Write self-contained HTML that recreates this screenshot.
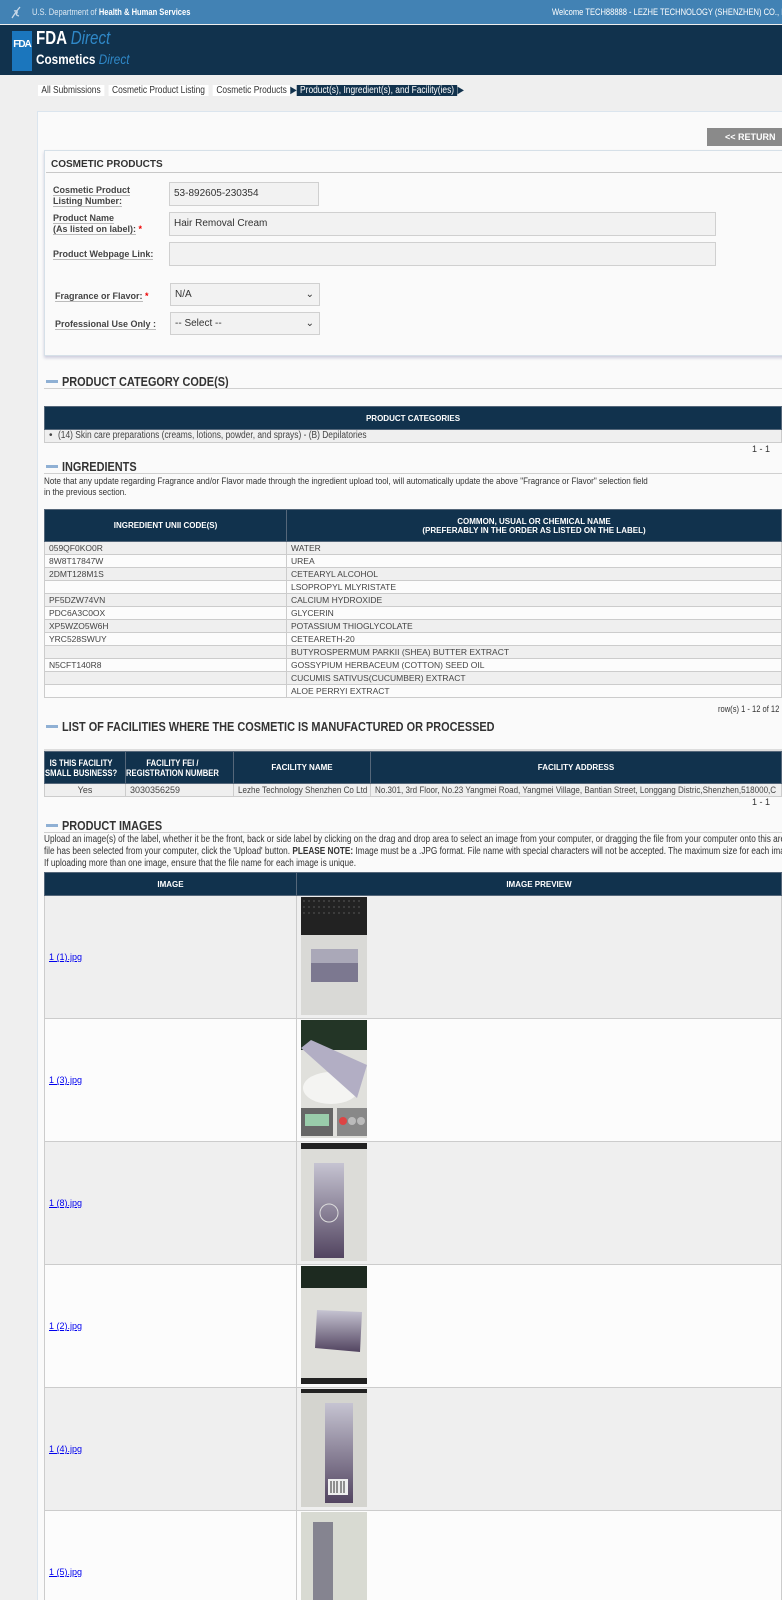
<!DOCTYPE html>
<html><head><meta charset="utf-8"><style>
*{margin:0;padding:0;box-sizing:border-box}
html,body{width:782px;height:1600px;overflow:hidden}
body{background:#efefef;font-family:"Liberation Sans",Arial,sans-serif;color:#333;position:relative}
.a{position:absolute}
.n{display:inline-block;transform:scaleX(.84);transform-origin:left top;white-space:nowrap}
.top{left:0;top:0;width:782px;height:24px;background:#4282b4;color:#dce8f2;font-size:9px}
.nav{left:0;top:25px;width:782px;height:50px;background:#11324d}
.panel{left:37px;top:111px;width:745px;height:1500px;background:#fafafa;border:1px solid #dbe5ee;border-right:none}
.h{font-weight:bold;font-size:13px;color:#333;left:62px}
.bar{width:12px;height:3px;background:#8fb0d4;left:46px}
.hl{left:44px;width:738px;height:1px;background:#d0d0d0}
table{border-collapse:collapse;position:absolute;left:44px;font-size:9px;table-layout:fixed}
th{background:#11324d;color:#fff;font-weight:bold;font-size:8px;border:1px solid #55677a;text-align:center;overflow:hidden;white-space:nowrap}
td{border:1px solid #ccc;padding:0 4px;color:#444;overflow:hidden;white-space:nowrap}
.g td{background:#efefef}
.w td{background:#fcfcfc}
.ing td{height:13px;line-height:12px;font-size:8.5px}
.lbl{font-size:9px;font-weight:bold;color:#444;left:53px;line-height:11px}
.lbl span{border-bottom:1px solid #bbb}
.inp{background:#f2f2f2;border:1px solid #d0d0d0;font-size:10px;color:#333;padding-left:4px;line-height:22px}
.req{color:#e00}
a{color:#00e;font-size:9px}
</style></head><body>
<div class="a top"><svg class="a" style="left:9px;top:5px" width="14" height="14" viewBox="0 0 14 14"><path d="M3 13 L7 7 L11 2 M5 6 Q9 5 8 8 Q6 10 10 11" stroke="#c8d8e8" stroke-width="1.3" fill="none"/></svg>
<span class="a n" style="left:32px;top:7px">U.S. Department of <b style="color:#fff">Health &amp; Human Services</b></span>
<span class="a n" style="left:552px;top:7px;color:#fff">Welcome TECH88888 - LEZHE TECHNOLOGY (SHENZHEN) CO., L</span></div>
<div class="a nav">
<div class="a" style="left:12px;top:6px;width:20px;height:40px;background:#1b76bd;color:#fff;font-weight:bold;font-size:10px;padding-top:8px;text-align:center;letter-spacing:-1px">FDA</div>
<div class="a n" style="left:36px;top:3px;color:#fff;font-weight:bold;font-size:18px">FDA <i style="color:#2f88c8;font-weight:normal">Direct</i></div>
<div class="a n" style="left:36px;top:26px;color:#fff;font-weight:bold;font-size:14px">Cosmetics <i style="color:#2f88c8;font-weight:normal">Direct</i></div>
</div>
<div class="a n" style="top:84px;left:38px;height:14px;font-size:10px;line-height:14px">
<span style="background:#fff;padding:0 4px">All Submissions</span> &nbsp;<span style="background:#fff;padding:0 4px">Cosmetic Product Listing</span> &nbsp;<span style="background:#fff;padding:0 4px">Cosmetic Products</span><span style="color:#11324d">▶</span><span style="background:#11324d;color:#fff;padding:0 4px">Product(s), Ingredient(s), and Facility(ies)</span><span style="color:#11324d">▶</span></div>
<div class="a panel"></div>
<div class="a" style="left:707px;top:128px;width:75px;height:18px;background:#8a8a8a;color:#fff;font-weight:bold;font-size:9px;line-height:18px;padding-left:18px;white-space:nowrap;overflow:hidden">&lt;&lt; RETURN</div>
<div class="a" style="left:44px;top:150px;width:745px;height:206px;background:#fafafa;border:1px solid #d6e0e8;box-shadow:0 2px 3px #ccd"></div>
<div class="a" style="left:51px;top:159px;font-weight:bold;font-size:10px;color:#333">COSMETIC PRODUCTS</div>
<div class="a hl" style="left:46px;top:172px;background:#c8c8c8"></div>
<div class="a lbl" style="top:185px"><span>Cosmetic Product</span><br><span>Listing Number:</span></div>
<div class="a inp" style="left:169px;top:182px;width:150px;height:24px">53-892605-230354</div>
<div class="a lbl" style="top:213px"><span>Product Name</span><br><span>(As listed on label):</span> <b class="req">*</b></div>
<div class="a inp" style="left:169px;top:212px;width:547px;height:24px">Hair Removal Cream</div>
<div class="a lbl" style="top:249px"><span>Product Webpage Link:</span></div>
<div class="a inp" style="left:169px;top:242px;width:547px;height:24px"></div>
<div class="a lbl" style="left:55px;top:291px"><span>Fragrance or Flavor:</span> <b class="req">*</b></div>
<div class="a inp" style="left:170px;top:283px;width:150px;height:23px">N/A<span class="a" style="right:5px;top:0">⌄</span></div>
<div class="a lbl" style="left:55px;top:319px"><span>Professional Use Only :</span></div>
<div class="a inp" style="left:170px;top:312px;width:150px;height:23px">-- Select --<span class="a" style="right:5px;top:0">⌄</span></div>

<div class="a bar" style="top:380px"></div><div class="a h n" style="top:374px">PRODUCT CATEGORY CODE(S)</div><div class="a hl" style="top:388px"></div>
<table style="top:406px;width:738px"><tr><th style="height:23px">PRODUCT CATEGORIES</th></tr><tr class="g"><td style="height:13px;font-size:10px;line-height:12px">• &nbsp;<span class="n">(14) Skin care preparations (creams, lotions, powder, and sprays) - (B) Depilatories</span></td></tr></table>
<div class="a" style="left:752px;top:444px;font-size:9px">1 - 1</div>

<div class="a bar" style="top:465px"></div><div class="a h n" style="top:459px">INGREDIENTS</div><div class="a hl" style="top:473px"></div>
<div class="a" style="left:44px;top:476px;font-size:9.6px;line-height:11px"><span class="n">Note that any update regarding Fragrance and/or Flavor made through the ingredient upload tool, will automatically update the above "Fragrance or Flavor" selection field</span><br><span class="n">in the previous section.</span></div>
<table class="ing" style="top:509px;width:738px">
<tr><th style="height:32px;width:242px">INGREDIENT UNII CODE(S)</th><th>COMMON, USUAL OR CHEMICAL NAME<br>(PREFERABLY IN THE ORDER AS LISTED ON THE LABEL)</th></tr>
<tr class="g"><td>059QF0KO0R</td><td>WATER</td></tr>
<tr class="w"><td>8W8T17847W</td><td>UREA</td></tr>
<tr class="g"><td>2DMT128M1S</td><td>CETEARYL ALCOHOL</td></tr>
<tr class="w"><td></td><td>LSOPROPYL MLYRISTATE</td></tr>
<tr class="g"><td>PF5DZW74VN</td><td>CALCIUM HYDROXIDE</td></tr>
<tr class="w"><td>PDC6A3C0OX</td><td>GLYCERIN</td></tr>
<tr class="g"><td>XP5WZO5W6H</td><td>POTASSIUM THIOGLYCOLATE</td></tr>
<tr class="w"><td>YRC528SWUY</td><td>CETEARETH-20</td></tr>
<tr class="g"><td></td><td>BUTYROSPERMUM PARKII (SHEA) BUTTER EXTRACT</td></tr>
<tr class="w"><td>N5CFT140R8</td><td>GOSSYPIUM HERBACEUM (COTTON) SEED OIL</td></tr>
<tr class="g"><td></td><td>CUCUMIS SATIVUS(CUCUMBER) EXTRACT</td></tr>
<tr class="w"><td></td><td>ALOE PERRYI EXTRACT</td></tr>
</table>
<div class="a n" style="left:718px;top:704px;font-size:9px">row(s) 1 - 12 of 12</div>

<div class="a bar" style="top:725px"></div><div class="a h n" style="top:719px">LIST OF FACILITIES WHERE THE COSMETIC IS MANUFACTURED OR PROCESSED</div><div class="a hl" style="top:749px;height:2px;background:#ddd"></div>
<table style="top:751px;width:738px">
<tr><th style="height:32px;width:81px"><span class="n" style="transform:scaleX(.85);font-size:9px">IS THIS FACILITY<br>SMALL BUSINESS?</span></th><th style="width:108px"><span class="n" style="transform:scaleX(.85);font-size:9px">FACILITY FEI /<br>REGISTRATION NUMBER</span></th><th style="width:137px">FACILITY NAME</th><th>FACILITY ADDRESS</th></tr>
<tr class="g"><td style="height:13px;text-align:center">Yes</td><td>3030356259</td><td style="font-size:9.6px"><span class="n">Lezhe Technology Shenzhen Co Ltd</span></td><td style="font-size:9.6px"><span class="n">No.301, 3rd Floor, No.23 Yangmei Road, Yangmei Village, Bantian Street, Longgang Distric,Shenzhen,518000,C</span></td></tr>
</table>
<div class="a" style="left:752px;top:797px;font-size:9px">1 - 1</div>

<div class="a bar" style="top:824px"></div><div class="a h n" style="top:818px">PRODUCT IMAGES</div><div class="a hl" style="top:832px"></div>
<div class="a" style="left:44px;top:834px;font-size:9.8px;line-height:12px"><span class="n">Upload an image(s) of the label, whether it be the front, back or side label by clicking on the drag and drop area to select an image from your computer, or dragging the file from your computer onto this area. O</span><br><span class="n">file has been selected from your computer, click the 'Upload' button. <b>PLEASE NOTE:</b> Image must be a .JPG format. File name with special characters will not be accepted. The maximum size for each image</span><br><span class="n">If uploading more than one image, ensure that the file name for each image is unique.</span></div>
<table style="top:872px;width:738px">
<tr><th style="height:23px;width:252px">IMAGE</th><th>IMAGE PREVIEW</th></tr>
<tr class="g"><td style="height:123px"><a href="#">1 (1).jpg</a></td><td><svg width="66" height="118" viewBox="0 0 66 118"><rect width="66" height="118" fill="#d9d9d6"/><rect width="66" height="38" fill="#222"/><path d="M2 4h60M2 10h60M2 16h60" stroke="#555" stroke-dasharray="2 3"/><rect x="10" y="52" width="47" height="33" fill="#7c7890"/><rect x="10" y="52" width="47" height="14" fill="#aaa8b8"/></svg></td></tr>
<tr class="w"><td style="height:123px"><a href="#">1 (3).jpg</a></td><td><svg width="66" height="118" viewBox="0 0 66 118"><rect width="66" height="118" fill="#e0e0dc"/><rect width="66" height="30" fill="#233526"/><ellipse cx="30" cy="68" rx="28" ry="16" fill="#f4f4f2"/><path d="M0 28 L10 20 L66 45 L56 78 Z" fill="#b2aec4"/><rect x="0" y="88" width="32" height="28" fill="#666"/><rect x="4" y="94" width="24" height="12" fill="#9ca"/><rect x="36" y="88" width="30" height="28" fill="#888"/><circle cx="42" cy="101" r="4" fill="#d44"/><circle cx="51" cy="101" r="4" fill="#bbb"/><circle cx="60" cy="101" r="4" fill="#bbb"/></svg></td></tr>
<tr class="g"><td style="height:123px"><a href="#">1 (8).jpg</a></td><td><svg width="66" height="118" viewBox="0 0 66 118"><defs><linearGradient id="p" x1="0" y1="0" x2="0" y2="1"><stop offset="0" stop-color="#c6c4d2"/><stop offset="1" stop-color="#524460"/></linearGradient></defs><rect width="66" height="118" fill="#dcdcd8"/><rect width="66" height="6" fill="#222"/><rect x="13" y="20" width="30" height="95" fill="url(#p)"/><circle cx="28" cy="70" r="9" fill="none" stroke="#ddd"/></svg></td></tr>
<tr class="w"><td style="height:123px"><a href="#">1 (2).jpg</a></td><td><svg width="66" height="118" viewBox="0 0 66 118"><rect width="66" height="118" fill="#dfdfda"/><rect width="66" height="22" fill="#1d2a20"/><path d="M16 44 L61 46 L59 86 L14 82 Z" fill="url(#p)"/><rect x="0" y="112" width="66" height="6" fill="#222"/></svg></td></tr>
<tr class="g"><td style="height:123px"><a href="#">1 (4).jpg</a></td><td><svg width="66" height="118" viewBox="0 0 66 118"><rect width="66" height="118" fill="#d4d4cf"/><rect width="66" height="4" fill="#222"/><rect x="24" y="14" width="28" height="100" fill="url(#p)"/><rect x="27" y="90" width="20" height="16" fill="#eee"/><path d="M30 92v12M33 92v12M36 92v12M40 92v12M43 92v12" stroke="#333"/></svg></td></tr>
<tr class="w"><td style="height:123px"><a href="#">1 (5).jpg</a></td><td><svg width="66" height="118" viewBox="0 0 66 118"><rect width="66" height="118" fill="#d8dad2"/><rect x="12" y="10" width="20" height="108" fill="#858490"/></svg></td></tr>
</table>
</body></html>
